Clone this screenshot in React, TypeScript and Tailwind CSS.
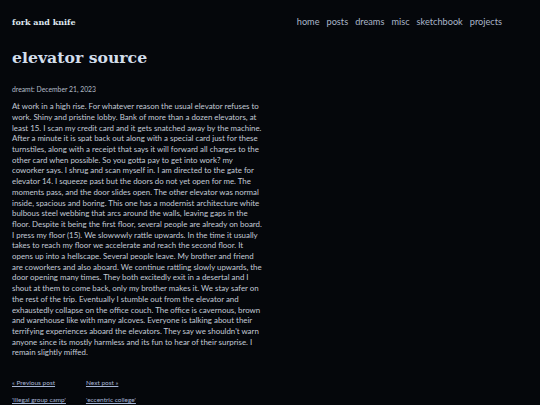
import React from "react";

const body = `At work in a high rise. For whatever reason the usual elevator refuses to work. Shiny and pristine lobby. Bank of more than a dozen elevators, at least 15. I scan my credit card and it gets snatched away by the machine. After a minute it is spat back out along with a special card just for these turnstiles, along with a receipt that says it will forward all charges to the other card when possible. So you gotta pay to get into work? my coworker says. I shrug and scan myself in. I am directed to the gate for elevator 14. I squeeze past but the doors do not yet open for me. The moments pass, and the door slides open. The other elevator was normal inside, spacious and boring. This one has a modernist architecture white bulbous steel webbing that arcs around the walls, leaving gaps in the floor. Despite it being the first floor, several people are already on board. I press my floor (15). We slowwwly rattle upwards. In the time it usually takes to reach my floor we accelerate and reach the second floor. It opens up into a hellscape. Several people leave. My brother and friend are coworkers and also aboard. We continue rattling slowly upwards, the door opening many times. They both excitedly exit in a desertal and I shout at them to come back, only my brother makes it. We stay safer on the rest of the trip. Eventually I stumble out from the elevator and exhaustedly collapse on the office couch. The office is cavernous, brown and warehouse like with many alcoves. Everyone is talking about their terrifying experiences aboard the elevators. They say we shouldn't warn anyone since its mostly harmless and its fun to hear of their surprise. I remain slightly miffed.`;

export default function App() {
  return (
    <div className="min-h-[405px] w-full bg-[#05070b] text-[#c3cad6]" style={{ fontFamily: "Lato, sans-serif" }}>
      <header className="flex items-center justify-between px-[12px] pt-[14px] h-[30px]">
        <div className="text-[8px] font-bold text-[#dfe6ef]" style={{ fontFamily: "'DejaVu Serif', serif" }}>fork and knife</div>
        <nav className="flex gap-[7px] pr-[26px] text-[9.2px] text-[#a9b5c8]">
          <span>home</span>
          <span>posts</span>
          <span>dreams</span>
          <span>misc</span>
          <span>sketchbook</span>
          <span>projects</span>
        </nav>
      </header>
      <main className="px-[12px] w-[274px]">
        <h1 className="mt-[17px] text-[15.7px] leading-[22px] font-bold text-[#d3deeb]" style={{ fontFamily: "'DejaVu Serif', serif" }}>elevator source</h1>
        <p className="mt-[15px] text-[6.8px] text-[#b4bcc7]">dreamt: December 21, 2023</p>
        <p className="mt-[7px] text-[7.9px] leading-[10.7px]">{body}</p>
        <table className="mt-[20px] text-[6.5px] leading-[9px] text-[#a6b6d6] underline">
          <tbody>
            <tr>
              <td className="pr-[20px] pb-[8px] align-top">« Previous post</td>
              <td className="pb-[8px] align-top">Next post »</td>
            </tr>
            <tr>
              <td className="pr-[20px]">'illegal group camp'</td>
              <td>'eccentric college'</td>
            </tr>
          </tbody>
        </table>
      </main>
    </div>
  );
}
